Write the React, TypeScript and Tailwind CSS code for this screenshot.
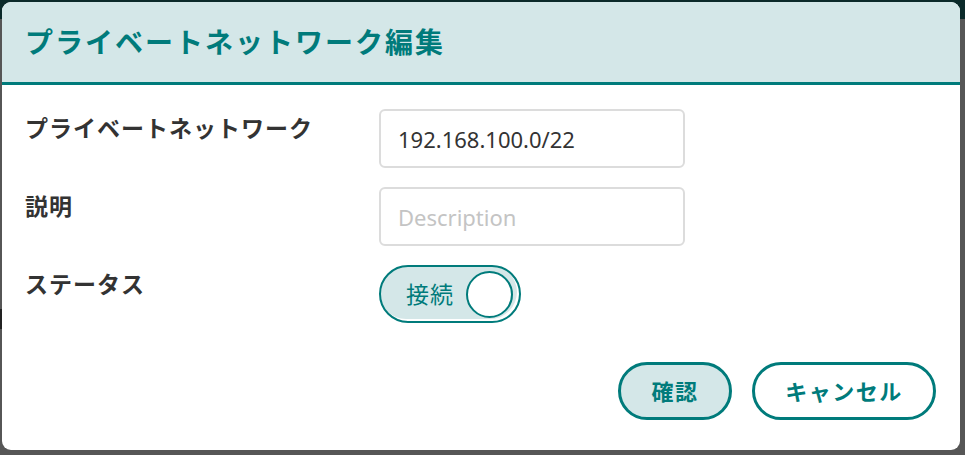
import React, { useState } from 'react';

const jp = "font-['Noto_Sans','Noto_Sans_CJK_JP',sans-serif]";

const FieldLabel: React.FC<{ children: React.ReactNode }> = ({ children }) => (
  <div className="text-[23px] font-semibold leading-[38px] tracking-[1px] text-[#333]">{children}</div>
);

const App: React.FC = () => {
  const [network, setNetwork] = useState('192.168.100.0/22');
  const [desc, setDesc] = useState('');
  const [connected, setConnected] = useState(true);

  return (
    <div className={`relative h-[455px] w-full overflow-hidden bg-[#565656] ${jp}`}>
      {/* page behind the modal */}
      <div className="h-[19px] bg-[#0b2a2a]" />
      <div className="ml-0 mt-[290px] h-[20px] w-[3px] bg-[#222]" />

      <div className="absolute left-[2px] top-[2px] flex h-[448px] w-[958px] flex-col overflow-hidden rounded-[9px] bg-white">
        <div className="flex h-[83px] items-center border-b-[3px] border-[#007b7b] bg-[#d4e7e8] pl-[23px]">
          <h2 className="text-[28px] font-bold tracking-[2px] text-[#007b7b]">プライベートネットワーク編集</h2>
        </div>

        <div className="grid grid-cols-[354px_306px] gap-y-[19px] pl-[23px] pt-[24px]">
          <FieldLabel>プライベートネットワーク</FieldLabel>
          <input
            value={network}
            onChange={(e) => setNetwork(e.target.value)}
            className="h-[59px] rounded-[6px] border-2 border-[#dcdcdc] px-[17px] text-[22px] text-[#333] outline-none"
          />

          <FieldLabel>説明</FieldLabel>
          <input
            value={desc}
            placeholder="Description"
            onChange={(e) => setDesc(e.target.value)}
            className="h-[59px] rounded-[6px] border-2 border-[#dcdcdc] px-[17px] text-[22px] text-[#333] outline-none placeholder:text-[#c4c4c4]"
          />

          <FieldLabel>ステータス</FieldLabel>
          <div>
            <button
              onClick={() => setConnected(!connected)}
              className="flex h-[58px] w-[142px] items-center justify-between rounded-full border-2 border-[#007b7b] bg-[#d4e7e8] pl-[25px] pr-[6px] shadow-[inset_-2px_-2px_0_0_#ffffff]"
            >
              <span className="text-[23px] tracking-[1px] text-[#007b7b]">{connected ? '接続' : '切断'}</span>
              <span className="h-[47px] w-[47px] rounded-full border-2 border-[#007b7b] bg-white" />
            </button>
          </div>
        </div>

        <div className="mt-[39px] flex justify-end gap-[20px] pr-[24px]">
          <button className="h-[58px] w-[114px] rounded-full border-[3px] border-[#007b7b] bg-[#d4e7e8] text-[22px] font-bold tracking-[1.5px] text-[#007b7b]">
            確認
          </button>
          <button className="h-[58px] w-[184px] rounded-full border-[3px] border-[#007b7b] bg-white text-[22px] font-bold tracking-[1.5px] text-[#007b7b]">
            キャンセル
          </button>
        </div>
      </div>
    </div>
  );
};

export default App;
